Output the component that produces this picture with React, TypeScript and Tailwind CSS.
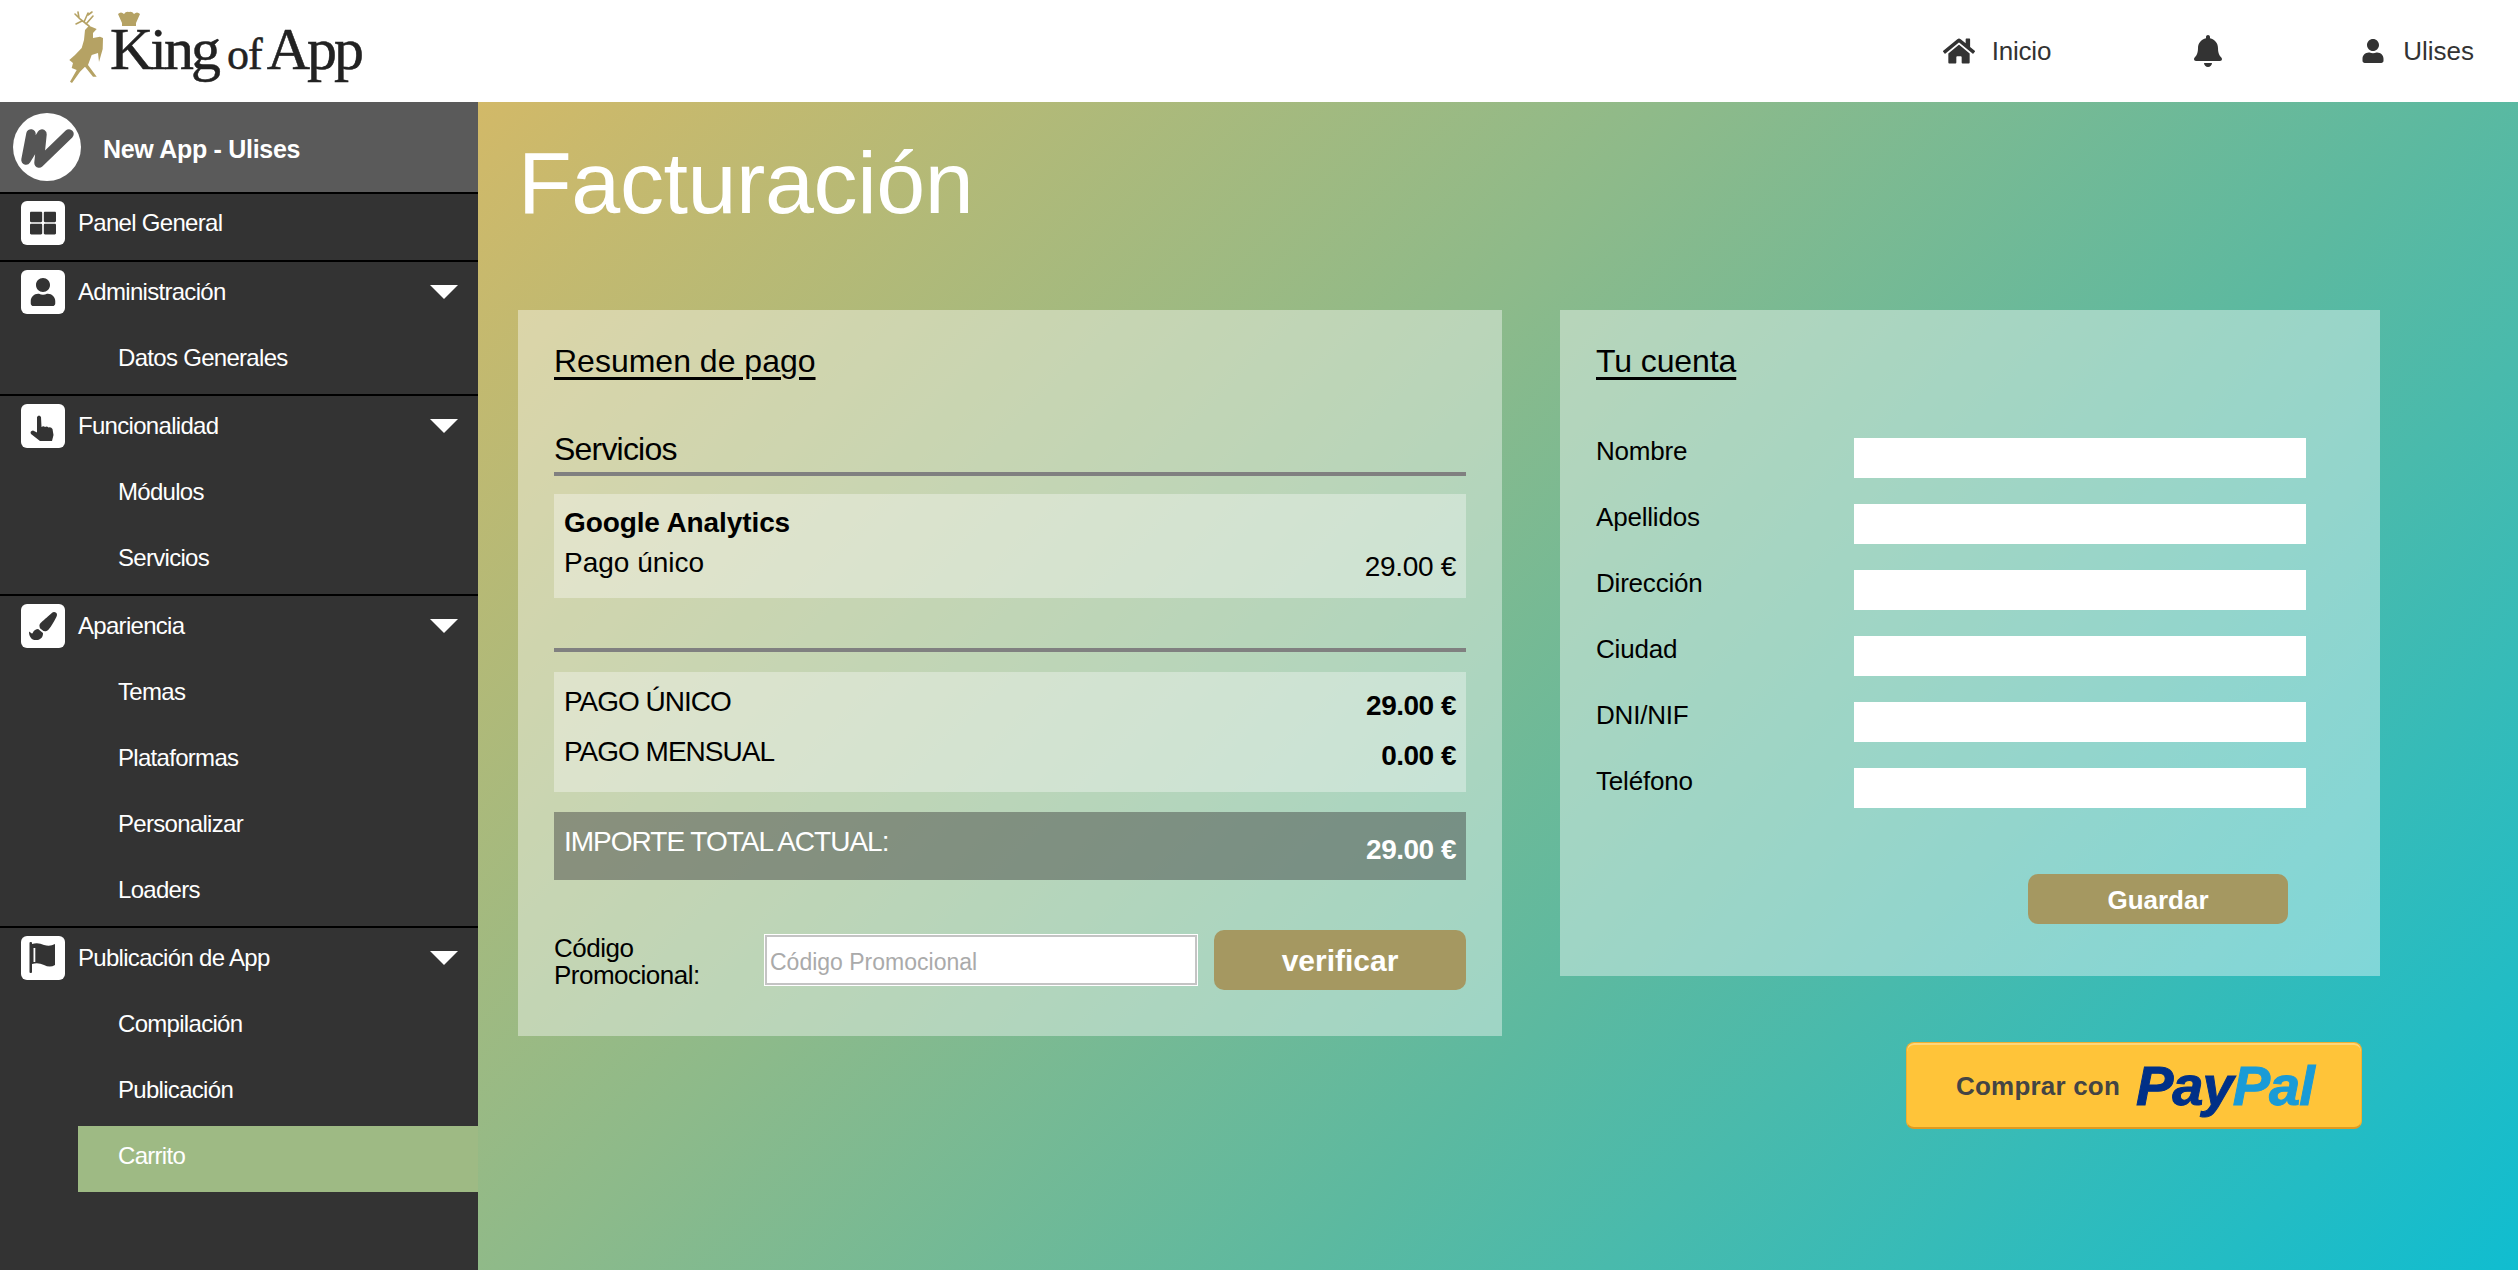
import { FaBell, FaHome, FaPaintBrush, FaThLarge, FaUser } from 'react-icons/fa'
import type { ReactNode } from 'react'

const SANS = "font-['Liberation_Sans',Arial,sans-serif]"

function HandIcon() {
  return (
    <svg width="44" height="44" viewBox="0 0 44 44" fill="#333">
      <path d="M16 13q2-3 4 0l.5 10q2-1.5 3.5 0 2-1 3.5.5 2.5-1 4 1.5l1 6-1.5 6H19l-9-7q-1.5-3 2-3.5l4 2z" />
    </svg>
  )
}

function FlagIcon() {
  return (
    <svg width="44" height="44" viewBox="0 0 44 44" fill="#333">
      <rect x="8.5" y="6" width="2.5" height="31" rx="1" />
      <path d="M11 8q6-2 12 1 6 2 11-1v21q-5 3-11 0-6-3-12-1z" />
      <rect x="12.5" y="12" width="1.8" height="14" fill="#fff" />
    </svg>
  )
}

const NAV = [
  { label: 'Administración', icon: <FaUser size={28} />, subs: ['Datos Generales'] },
  { label: 'Funcionalidad', icon: <HandIcon />, subs: ['Módulos', 'Servicios'] },
  { label: 'Apariencia', icon: <FaPaintBrush size={28} />, subs: ['Temas', 'Plataformas', 'Personalizar', 'Loaders'] },
  { label: 'Publicación de App', icon: <FlagIcon />, subs: ['Compilación', 'Publicación', 'Carrito'] },
]

const FIELDS = ['Nombre', 'Apellidos', 'Dirección', 'Ciudad', 'DNI/NIF', 'Teléfono']

function Logo() {
  return (
    <div className="relative flex items-start h-[102px] w-[478px] pl-[60px]">
      <svg width="50" height="85" viewBox="0 0 50 85" className="mt-[5px] shrink-0" fill="#b5a264">
        <path d="M36.7 24L29 20.7 25 25l-1 10-2.3 8L15 50l-5.7 5L13 58l-1.3 5 5 2L10 76.7l2 1.3 8-11.3 5-5 8 10h3.7L28 60l3.700-10 6.300-2 1 9 3.700-13 .3-11-3-1.300-7 1.300v-5z" />
        <path d="M29 21l-9-7-5-5M22 16l-6 3M24 17l4-9M26 19l7-8M19 13l-1-6M28 10l4-3" fill="none" stroke="#b5a264" strokeWidth="1.6" strokeLinecap="round" />
      </svg>
      <div className="flex items-baseline pt-[18px] font-['Liberation_Serif',serif] text-[#222] [-webkit-text-stroke:0.5px_#222]">
        <span className="text-[60px] leading-[62px] tracking-[-3px]">King</span>
        <span className="text-[44px] leading-[62px] ml-[9px] tracking-[-1px]">of</span>
        <span className="text-[60px] leading-[62px] ml-[5px] tracking-[-3px]">App</span>
      </div>
      <svg width="24" height="16" viewBox="0 0 24 16" className="absolute left-[117px] top-[11px]" fill="#b5a264">
        <path d="M1 3q3-3 6 0 2-3 5-2 3-1 5 2 3-3 6 0l-4 9v3H5v-3z" />
      </svg>
    </div>
  )
}

function Tile({ children }: { children: ReactNode }) {
  return (
    <span className="w-[44px] h-[44px] rounded-[6px] bg-white text-[#333] flex items-center justify-center shrink-0">
      {children}
    </span>
  )
}

function Arrow() {
  return (
    <svg width="28" height="14" viewBox="0 0 28 14" className="ml-auto mr-[20px]">
      <path d="M0 0h28L14 14z" fill="#fff" />
    </svg>
  )
}

function Sidebar() {
  return (
    <aside className="w-[478px] shrink-0 bg-[#333333] text-white text-[24px] tracking-[-0.7px]">
      <div className="h-[90px] bg-[#5a5a5a] flex items-center pl-[13px]">
        <span className="w-[68px] h-[68px] rounded-full bg-white shrink-0">
          <svg width="68" height="68" viewBox="3 3 68 68" fill="none" stroke="#555" strokeWidth="9.5" strokeLinecap="round" strokeLinejoin="round">
            <path d="M21 24L16 50l16-26-3 29 30-29" />
          </svg>
        </span>
        <span className="ml-[22px] pt-[5px] text-[25px] font-bold tracking-[-0.3px]">New App - Ulises</span>
      </div>
      <div className="h-[70px] border-y-2 border-black flex items-center gap-[13px] pl-[21px] pb-[8px]">
        <Tile><FaThLarge size={26} /></Tile>
        <span>Panel General</span>
      </div>
      {NAV.map((section, i) => (
        <div key={section.label} className={i < NAV.length - 1 ? 'border-b-2 border-black' : ''}>
          <div className="h-[66px] flex items-center gap-[13px] pl-[21px] pb-[6px]">
            <Tile>{section.icon}</Tile>
            <span>{section.label}</span>
            <Arrow />
          </div>
          {section.subs.map((sub) => (
            <div
              key={sub}
              className={`h-[66px] ml-[78px] pl-[40px] pb-[6px] flex items-center ${sub === 'Carrito' ? 'bg-[#9eba84]' : ''}`}
            >
              {sub}
            </div>
          ))}
        </div>
      ))}
    </aside>
  )
}

function ResumenPanel() {
  return (
    <section className="w-[984px] bg-white/40 px-[36px] pt-[31px] pb-[46px] text-black text-[28px]">
      <h2 className="text-[32px] leading-[40px] underline underline-offset-[5px]">Resumen de pago</h2>
      <div className="mt-[48px] text-[32px] leading-[40px] tracking-[-0.8px]">Servicios</div>
      <div className="mt-[3px] h-[4px] bg-[#808080]" />
      <div className="mt-[18px] h-[104px] bg-white/35 px-[10px] pt-[9px] leading-[40px]">
        <div className="font-bold tracking-[-0.1px]">Google Analytics</div>
        <div className="flex justify-between h-[40px]">
          <span>Pago único</span>
          <span className="pt-[4px] tracking-[-0.3px]">29.00 €</span>
        </div>
      </div>
      <div className="mt-[50px] h-[4px] bg-[#808080]" />
      <div className="mt-[20px] h-[120px] bg-white/35 px-[10px] pt-[5px] leading-[50px]">
        <div className="flex justify-between h-[50px]">
          <span className="tracking-[-1px]">PAGO ÚNICO</span>
          <span className="pt-[4px] font-bold tracking-[-0.5px]">29.00 €</span>
        </div>
        <div className="flex justify-between h-[50px]">
          <span className="tracking-[-1px]">PAGO MENSUAL</span>
          <span className="pt-[4px] font-bold tracking-[-0.5px]">0.00 €</span>
        </div>
      </div>
      <div className="mt-[20px] h-[68px] bg-[#3c3c3c]/45 px-[10px] flex justify-between text-white leading-[40px]">
        <span className="pt-[10px] tracking-[-1px]">IMPORTE TOTAL ACTUAL:</span>
        <span className="pt-[18px] font-bold tracking-[-0.5px]">29.00 €</span>
      </div>
      <div className="mt-[50px] h-[60px] flex items-center">
        <label className="w-[211px] shrink-0 pt-[3px] text-[26px] leading-[27px] tracking-[-0.5px]">
          Código
          <br />
          Promocional:
        </label>
        <input
          placeholder="Código Promocional"
          className="w-[432px] h-[50px] bg-white border-2 border-[#c4c4c4] shadow-[0_0_0_1px_#fff] px-[3px] pt-[4px] text-[23px] outline-none placeholder:text-[#aaaaaa]"
        />
        <button className="ml-[17px] w-[252px] h-[60px] rounded-[10px] bg-[#a59861] text-white text-[30px] font-bold">
          verificar
        </button>
      </div>
    </section>
  )
}

function CuentaPanel() {
  return (
    <section className="w-[820px] bg-white/40 px-[36px] pt-[31px] pb-[52px] text-black text-[26px]">
      <h2 className="text-[32px] leading-[40px] tracking-[-0.1px] underline underline-offset-[5px]">Tu cuenta</h2>
      <div className="mt-[57px] flex flex-col gap-[26px]">
        {FIELDS.map((field) => (
          <div key={field} className="flex h-[40px]">
            <label className="w-[258px] leading-[26px] tracking-[-0.2px]">{field}</label>
            <input className="w-[452px] h-[40px] bg-white outline-none" />
          </div>
        ))}
      </div>
      <button className="mt-[66px] ml-[432px] block w-[260px] h-[50px] pt-[2px] rounded-[10px] bg-[#a59861] text-white text-[26px] font-bold">
        Guardar
      </button>
    </section>
  )
}

function PayPalButton() {
  return (
    <button className="mt-[66px] ml-[346px] w-[456px] h-[87px] pt-[2px] rounded-[8px] bg-[#ffc439] border border-[#f0b030] border-b-2 border-b-[#e09a20] flex items-center pl-[49px] shadow-[inset_0_2px_0_#ffd67a]">
      <span className="text-[26px] font-bold text-[#444] mr-[16px] tracking-[0.2px]">Comprar con</span>
      <span className="text-[56px] leading-none font-bold italic tracking-[-1px] [-webkit-text-stroke:1px]">
        <span className="text-[#003087]">Pay</span>
        <span className="text-[#1a9bd7]">Pal</span>
      </span>
    </button>
  )
}

export default function App() {
  return (
    <div className={`h-screen flex flex-col overflow-hidden bg-white ${SANS}`}>
      <header className="h-[102px] shrink-0 flex items-center text-[#333] text-[26px]">
        <Logo />
        <div className="ml-auto flex items-center">
          <FaHome size={32} className="mr-[17px]" />
          <span className="tracking-[-0.2px]">Inicio</span>
          <FaBell size={32} className="ml-[141px]" />
          <FaUser size={24} className="ml-[137px] mr-[18px]" />
          <span className="mr-[44px]">Ulises</span>
        </div>
      </header>
      <div className="flex-1 flex min-h-0">
        <Sidebar />
        <main className="flex-1 pl-[40px] bg-[linear-gradient(135deg,#d2b968_0%,#8dba8a_38%,#5cb9a0_62%,#10bdd0_100%)]">
          <h1 className="h-[208px] pt-[26px] text-[88px] leading-[110px] text-white tracking-[-0.4px]">Facturación</h1>
          <div className="flex items-start gap-[58px]">
            <ResumenPanel />
            <div>
              <CuentaPanel />
              <PayPalButton />
            </div>
          </div>
        </main>
      </div>
    </div>
  )
}
